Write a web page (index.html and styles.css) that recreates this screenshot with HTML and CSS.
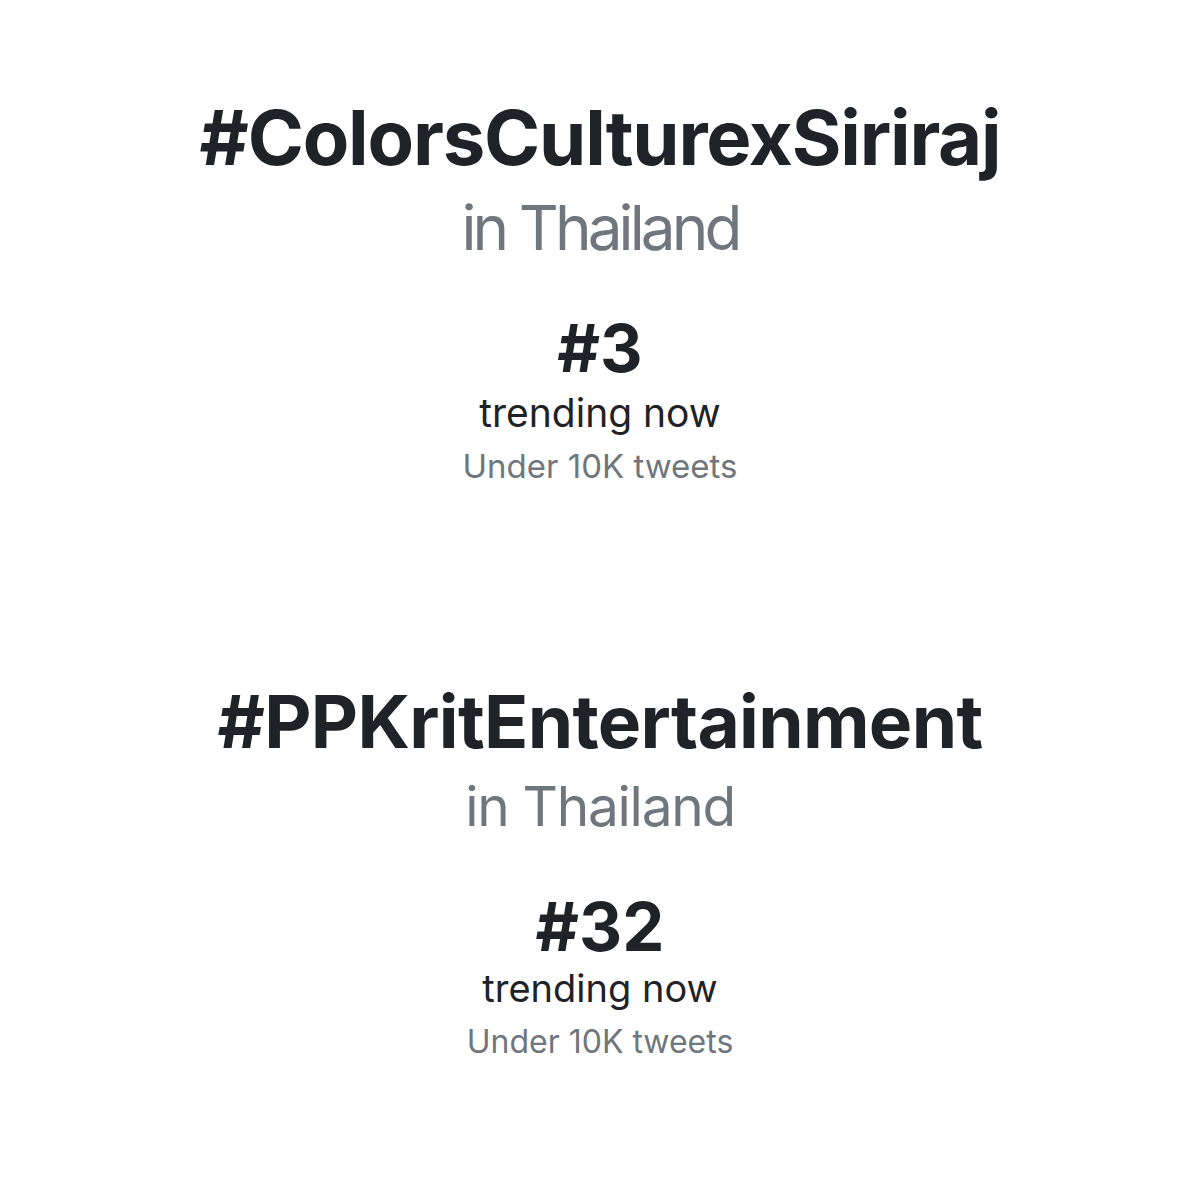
FILE: index.html
```html
<!DOCTYPE html>
<html lang="en">
<head>
<meta charset="utf-8">
<title>Trending in Thailand</title>
<link rel="stylesheet" href="styles.css">
</head>
<body>
<main class="page">
  <section class="trend trend-a">
    <h1 class="tag">#ColorsCulturexSiriraj</h1>
    <p class="loc">in Thailand</p>
    <p class="rank">#3</p>
    <p class="status">trending now</p>
    <p class="count">Under 10K tweets</p>
  </section>
  <section class="trend trend-b">
    <h1 class="tag">#PPKritEntertainment</h1>
    <p class="loc">in Thailand</p>
    <p class="rank">#32</p>
    <p class="status">trending now</p>
    <p class="count">Under 10K tweets</p>
  </section>
</main>
</body>
</html>
```

FILE: styles.css
```css
html, body {
  margin: 0;
  padding: 0;
  background: #ffffff;
}

.page {
  width: 1200px;
  height: 1200px;
  display: flex;
  flex-direction: column;
  align-items: center;
  font-family: Inter, "Noto Sans", sans-serif;
  color: #1f2226;
}

.trend {
  display: flex;
  flex-direction: column;
  align-items: center;
  text-align: center;
}

.trend p,
.trend h1 {
  margin: 0;
  line-height: 1;
  white-space: nowrap;
}

.tag {
  font-weight: 700;
}

.loc {
  font-weight: 400;
  color: #6f767d;
}

.rank {
  font-weight: 700;
}

.status {
  font-weight: 400;
  color: #1f2226;
}

.count {
  font-weight: 400;
  color: #6f767d;
}

/* first block */
.trend-a {
  margin-top: 99px;
}
.trend-a .tag {
  font-size: 76px;
  letter-spacing: -1.2px;
}
.trend-a .loc {
  font-size: 62px;
  letter-spacing: -3.9px;
  margin-top: 22px;
}
.trend-a .rank {
  font-size: 66px;
  margin-top: 56px;
}
.trend-a .status {
  font-size: 39px;
  margin-top: 12px;
}
.trend-a .count {
  font-size: 33px;
  margin-top: 18px;
}

/* second block */
.trend-b {
  margin-top: 202px;
}
.trend-b .tag {
  font-size: 73px;
  letter-spacing: -0.7px;
}
.trend-b .loc {
  font-size: 55px;
  letter-spacing: -1.3px;
  margin-top: 21px;
}
.trend-b .rank {
  font-size: 67px;
  margin-top: 59px;
}
.trend-b .status {
  font-size: 38px;
  margin-top: 9px;
}
.trend-b .count {
  font-size: 32px;
  margin-top: 19px;
}
```
